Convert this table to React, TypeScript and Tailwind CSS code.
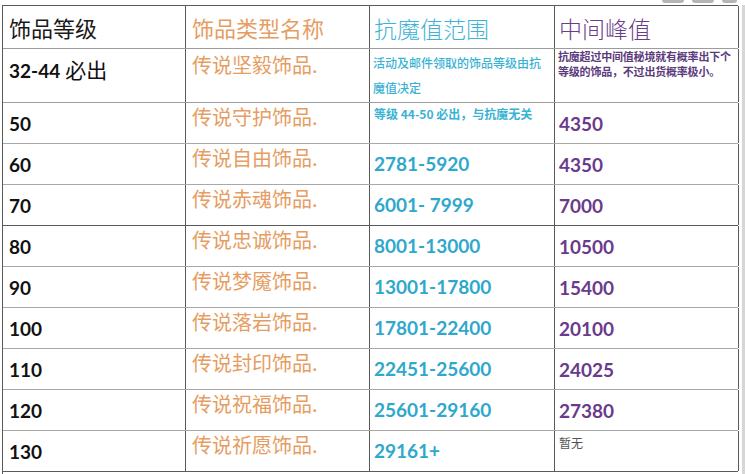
import React from 'react'

type Row = {
  level: string
  name: string
  range: React.ReactNode
  peak: React.ReactNode
  rangeTop?: boolean
  peakTop?: boolean
}

const rows: Row[] = [
  {
    level: '50',
    name: '传说守护饰品.',
    range: <div className="text-[12px] font-bold leading-[16px]">等级 44-50 必出，与抗魔无关</div>,
    rangeTop: true,
    peak: '4350',
  },
  { level: '60', name: '传说自由饰品.', range: '2781-5920', peak: '4350' },
  { level: '70', name: '传说赤魂饰品.', range: '6001- 7999', peak: '7000' },
  { level: '80', name: '传说忠诚饰品.', range: '8001-13000', peak: '10500' },
  { level: '90', name: '传说梦魇饰品.', range: '13001-17800', peak: '15400' },
  { level: '100', name: '传说落岩饰品.', range: '17801-22400', peak: '20100' },
  { level: '110', name: '传说封印饰品.', range: '22451-25600', peak: '24025' },
  { level: '120', name: '传说祝福饰品.', range: '25601-29160', peak: '27380' },
  {
    level: '130',
    name: '传说祈愿饰品.',
    range: '29161+',
    peak: <div className="text-[12px] font-normal text-[#555] leading-[16px]">暂无</div>,
    peakTop: true,
  },
]

const cjk = "font-['Noto_Sans_CJK_SC','Noto_Sans',sans-serif]"
const num = "font-['Lato','Noto_Sans_CJK_SC',sans-serif]"

export default function App() {
  return (
    <div className="w-[745px] h-[474px] overflow-hidden bg-white flex flex-col">
      {/* clipped window buttons at top */}
      <div className="h-[5px] flex justify-end gap-[8px] pr-[8px] shrink-0">
        <div className="w-[22px] h-[3px] rounded-b-full bg-[#b5b5b5]" />
        <div className="w-[22px] h-[3px] rounded-b-full bg-[#b5b5b5]" />
        <div className="w-[15px] h-[3px] rounded-b-full bg-[#b5b5b5]" />
      </div>

      <div className="flex">
        <div className="ml-[2px] w-[736px] border-l border-t border-[#5a5a5a]">
          {/* header */}
          <div className="grid grid-cols-[183px_184px_185px_184px] h-[43px] border-b border-[#9c9c9c]">
            <div className={`border-r border-[#5a5a5a] flex items-center pl-[6px] text-[22px] text-[#1a1a1a] ${cjk}`}>
              饰品等级
            </div>
            <div className={`border-r border-[#5a5a5a] flex items-center pl-[6px] text-[22px] text-[#e69d62] ${cjk}`}>
              饰品类型名称
            </div>
            <div className={`border-r border-[#5a5a5a] flex items-center pl-[4px] pt-[3px] text-[23px] font-light text-[#3fb3d6] ${cjk}`}>
              抗魔值范围
            </div>
            <div className={`border-r border-[#5a5a5a] flex items-center pl-[4px] pt-[3px] text-[23px] font-light text-[#6a3d8a] ${cjk}`}>
              中间峰值
            </div>
          </div>

          {/* 32-44 row */}
          <div className="grid grid-cols-[183px_184px_185px_184px] h-[54px] border-b border-[#9c9c9c]">
            <div className="border-r border-[#5a5a5a] pl-[6px] pt-[8px] flex items-baseline gap-[5px] text-[#111]">
              <span className={`text-[19px] font-bold leading-[24px] ${num}`}>32-44</span>
              <span className={`text-[21px] leading-[24px] ${cjk}`}>必出</span>
            </div>
            <div className={`border-r border-[#5a5a5a] pl-[6px] pt-[4px] text-[20px] leading-[24px] text-[#e69d62] ${cjk}`}>
              传说坚毅饰品.
            </div>
            <div className={`border-r border-[#5a5a5a] pl-[3px] pt-[1px] text-[12px] font-medium leading-[25px] text-[#3ab2d4] ${cjk}`}>
              <div>活动及邮件领取的饰品等级由抗</div>
              <div>魔值决定</div>
            </div>
            <div className={`border-r border-[#5a5a5a] pl-[3px] text-[11px] font-bold leading-[15px] text-[#5b3b7c] tracking-[-0.2px] ${cjk}`}>
              <div>抗魔超过中间值秘境就有概率出下个</div>
              <div>等级的饰品，不过出货概率极小。</div>
            </div>
          </div>

          {rows.map((r, i) => (
            <div
              key={r.level}
              className={`grid grid-cols-[183px_184px_185px_184px] h-[41px] border-b ${
                i === 2 || i === rows.length - 1 ? 'border-[#5a5a5a]' : 'border-[#a8a8a8]'
              }`}
            >
              <div className={`border-r border-[#5a5a5a] flex items-center pl-[6px] pt-[2px] text-[19px] font-bold text-[#111] ${num}`}>
                {r.level}
              </div>
              <div className={`border-r border-[#5a5a5a] pl-[6px] pt-[2px] text-[20px] leading-[24px] text-[#e69d62] ${cjk}`}>
                {r.name}
              </div>
              <div
                className={`border-r border-[#5a5a5a] pl-[4px] text-[19px] font-bold text-[#2fa8cc] ${num} ${
                  r.rangeTop ? `pt-[3px] ${cjk} text-[#3ab2d4]` : 'flex items-center pt-[1px]'
                }`}
              >
                {r.range}
              </div>
              <div
                className={`border-r border-[#5a5a5a] pl-[4px] text-[19px] font-bold text-[#6a3a8c] ${num} ${
                  r.peakTop ? `pt-[4px] ${cjk}` : 'flex items-center pt-[2px]'
                }`}
              >
                {r.peak}
              </div>
            </div>
          ))}
        </div>
        <div className="ml-[4px] w-[3px] h-[470px] bg-[#d6d6d6]" />
      </div>
    </div>
  )
}
